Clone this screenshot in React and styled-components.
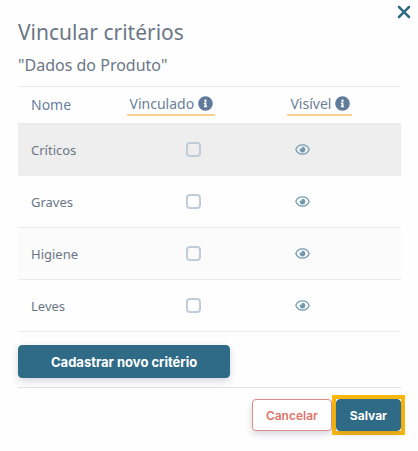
import React, { useState } from "react";
import styled, { createGlobalStyle } from "styled-components";
import { FaInfoCircle } from "react-icons/fa";
import { FaXmark } from "react-icons/fa6";

const GlobalStyle = createGlobalStyle`
  * {
    box-sizing: border-box;
  }

  body {
    margin: 0;
    background-color: #fefefe;
    color: #6b7785;
    font-family: "Noto Sans", "Open Sans", sans-serif;
  }

  button {
    font-family: inherit;
    cursor: pointer;
  }
`;

const Modal = styled.main`
  padding: 2px 17px 16px 18px;
`;

const Header = styled.header`
  display: flex;
  justify-content: space-between;
  align-items: flex-start;
  margin-right: -13px;
`;

const Title = styled.h1`
  margin: 16px 0 0;
  font-size: 21px;
  line-height: 28px;
  font-weight: 400;
`;

const Subtitle = styled.h2`
  margin: 6px 0 8px;
  font-size: 16px;
  line-height: 26px;
  font-weight: 400;
`;

const CloseButton = styled.button`
  display: flex;
  padding: 0;
  border: none;
  background: none;
  color: #2f6b87;
  font-size: 20px;
`;

const Table = styled.table`
  width: 100%;
  table-layout: fixed;
  border-collapse: collapse;
  border-top: 1px solid #e9ebed;
`;

const Th = styled.th`
  width: ${({ $width }) => $width};
  height: 37px;
  padding: 0 0 0 ${({ $indent }) => $indent};
  border-bottom: 2px solid #e8ecef;
  text-align: left;
  vertical-align: middle;
  color: #6780a0;
  font-size: 14px;
  line-height: 20px;
  font-weight: 400;
`;

const Marked = styled.span`
  display: inline-flex;
  align-items: center;
  gap: 4px;
  padding: 0 2px 0 3px;
  border-bottom: 2px solid #fbd08a;
  color: #6b7f98;

  svg {
    color: #5f7a9b;
    font-size: 15px;
  }
`;

const Row = styled.tr`
  height: 52px;
  background-color: ${({ $active, $striped }) =>
    $active ? "#eeeeee" : $striped ? "#fbfbfb" : "transparent"};
  border-bottom: 1px solid #e9ebed;
`;

const Td = styled.td`
  padding: 0 0 0 ${({ $indent }) => $indent};
  vertical-align: middle;
  font-size: 13px;
  line-height: 20px;
`;

const Checkbox = styled.input`
  appearance: none;
  display: block;
  width: 15px;
  height: 15px;
  margin: 0;
  border: 2px solid #c0ccd9;
  border-radius: 4px;
  cursor: pointer;

  &:checked {
    border-color: #2f6b87;
    background-color: #2f6b87;
  }
`;

const EyeButton = styled.button`
  display: flex;
  padding: 0;
  border: none;
  background: none;
  color: #7199ae;
`;

const Button = styled.button`
  height: ${({ $wide }) => ($wide ? "33px" : "32px")};
  padding: 0 ${({ $wide }) => ($wide ? "32px" : "13px")};
  border: 1px solid ${({ $outline }) => ($outline ? "#dc8f87" : "#2f6b87")};
  border-radius: 4px;
  background-color: ${({ $outline }) => ($outline ? "#ffffff" : "#2f6b87")};
  box-shadow: 0 3px 7px rgba(50, 50, 93, 0.2);
  color: ${({ $outline }) => ($outline ? "#dc756c" : "#ffffff")};
  font-family: Inter, "Liberation Sans", sans-serif;
  font-size: ${({ $wide }) => ($wide ? "13px" : "12px")};
  font-weight: ${({ $outline }) => ($outline ? 600 : 700)};
`;

const Actions = styled.div`
  display: flex;
  padding: 13px 0 9px;
`;

const Footer = styled.footer`
  display: flex;
  justify-content: flex-end;
  align-items: center;
  margin-right: -4px;
  padding-top: 7px;
`;

const Divider = styled.hr`
  margin: 0;
  border: none;
  border-top: 1px solid #dfe2e5;
`;

const Highlight = styled.div`
  display: flex;
  border: 4px solid #fbb90d;
  background-color: #ffffff;
`;

const EyeIcon = () => (
  <svg width="15" height="11" viewBox="0 0 15 11" aria-hidden="true">
    <path
      d="M0.8 5.5C2 2.4 4.6 0.9 7.5 0.9S13 2.4 14.2 5.5C13 8.6 10.4 10.1 7.5 10.1S2 8.6 0.8 5.5Z"
      fill="none"
      stroke="currentColor"
      strokeWidth="1.2"
    />
    <path
      d="M7.5 2.8A2.8 2.8 0 1 1 4.7 5.6C4.7 5.1 4.8 4.7 5 4.4C5.8 5 7 4.6 7 3.6C7 3.3 6.9 3.1 6.7 2.9Z"
      fill="currentColor"
    />
  </svg>
);

const criteria = ["Críticos", "Graves", "Higiene", "Leves"];

const App = () => {
  const [linked, setLinked] = useState({});

  const toggle = (name) => {
    setLinked({ ...linked, [name]: !linked[name] });
  };

  return (
    <>
      <GlobalStyle />
      <Modal>
        <Header>
          <div>
            <Title>Vincular critérios</Title>
            <Subtitle>"Dados do Produto"</Subtitle>
          </div>
          <CloseButton type="button" aria-label="Fechar">
            <FaXmark />
          </CloseButton>
        </Header>

        <Table>
          <thead>
            <tr>
              <Th $width="26%" $indent="13px">Nome</Th>
              <Th $width="42%" $indent="9px">
                <Marked>
                  Vinculado <FaInfoCircle />
                </Marked>
              </Th>
              <Th $width="32%" $indent="9px">
                <Marked>
                  Visível <FaInfoCircle />
                </Marked>
              </Th>
            </tr>
          </thead>
          <tbody>
            {criteria.map((name, index) => (
              <Row key={name} $active={index === 0} $striped={index === 2}>
                <Td $indent="13px">{name}</Td>
                <Td $indent="68px">
                  <Checkbox
                    type="checkbox"
                    aria-label={`Vinculado: ${name}`}
                    checked={!!linked[name]}
                    onChange={() => toggle(name)}
                  />
                </Td>
                <Td $indent="17px">
                  <EyeButton type="button" aria-label={`Visível: ${name}`}>
                    <EyeIcon />
                  </EyeButton>
                </Td>
              </Row>
            ))}
          </tbody>
        </Table>

        <Actions>
          <Button type="button" $wide>Cadastrar novo critério</Button>
        </Actions>

        <Divider />
        <Footer>
          <Button type="button" $outline>Cancelar</Button>
          <Highlight>
            <Button type="button">Salvar</Button>
          </Highlight>
        </Footer>
      </Modal>
    </>
  );
};

export default App;
